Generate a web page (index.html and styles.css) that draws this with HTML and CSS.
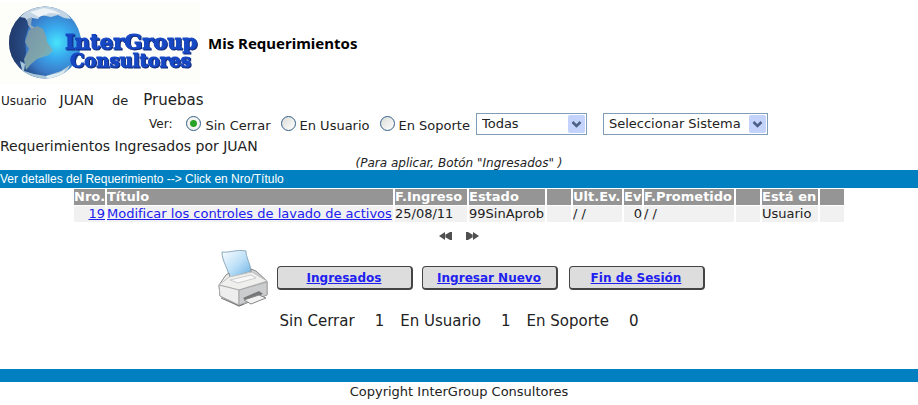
FILE: index.html
```html
<!DOCTYPE html>
<html lang="es">
<head>
<meta charset="utf-8">
<meta name="viewport" content="width=device-width, initial-scale=1">
<title>Mis Requerimientos</title>
<link rel="stylesheet" href="styles.css">
</head>
<body>
<header class="header">
  <svg class="logo" viewBox="0 0 200 82" role="img" aria-label="InterGroup Consultores">
    <defs>
      <radialGradient id="sea" cx="0.66" cy="0.5" r="0.68">
        <stop offset="0" stop-color="#48e4fb"/>
        <stop offset="0.3" stop-color="#39aaee"/>
        <stop offset="0.62" stop-color="#3a79c6"/>
        <stop offset="0.85" stop-color="#23487f"/>
        <stop offset="1" stop-color="#1b3260"/>
      </radialGradient>
      <linearGradient id="land" x1="0" y1="0" x2="1" y2="1">
        <stop offset="0" stop-color="#7792a8"/>
        <stop offset="0.6" stop-color="#7fa6ac"/>
        <stop offset="1" stop-color="#62c4d4"/>
      </linearGradient>
      <clipPath id="globe"><circle cx="45" cy="40.500" r="36"/></clipPath>
      <filter id="soft"><feGaussianBlur stdDeviation="0.7"/></filter>
    </defs>
    <rect width="200" height="82" fill="#fdfefa"/>
    <g clip-path="url(#globe)">
      <rect x="8" y="3" width="74" height="75" fill="url(#sea)"/>
      <g filter="url(#soft)" transform="translate(0 -2)">
        <path d="M9 25 L26 15 L29 26 L25 39 L26 52 L24 62 L13 62 L8 45Z" fill="#213a6e" opacity="0.7"/>
        <path d="M20 17 L31 7 L47 5 L64 10 L71 19 L64 18 L58 15 L51 17 L41 15 L38 19 L32 18 L29 23 L25 18Z" fill="#c3d4e4"/>
        <path d="M30 12 L44 8 L53 10 L61 14 L50 13 L39 17Z" fill="#edf3f6"/>
        <path d="M27 19 L32 17 L31 25 L35 28 L32 30 L28 25Z" fill="#91a9be"/>
        <path d="M29 30 L37 26 L43 29 L46 36 L47 42 L53 50 L49 55 L43 57 L37 59 L31 64 L26 70 L24 59 L29 49 L25 42Z" fill="url(#land)"/>
        <path d="M20 61 L25 64 L24 71 L34 74 L46 76 L61 71 L70 65 L64 78 L43 82 L24 78Z" fill="#a9c7da"/>
        <path d="M46 76 L59 73 L66 69 L60 78 L48 80Z" fill="#e0edf0"/>
      </g>
    </g>
    <g class="logo-text">
      <text x="65" y="47">InterGroup</text>
      <text class="logo-small" x="70" y="65">Consultores</text>
    </g>
  </svg>
  <h1 class="page-title">Mis Requerimientos</h1>
</header>

<main>
  <div class="user">
    <span class="user-label">Usuario</span>
    <span class="user-name">JUAN</span>
    <span class="user-of">de</span>
    <span class="user-last">Pruebas</span>
  </div>

  <form class="filters">
    <span class="see">Ver:</span>
    <label class="option"><input type="radio" name="ver" checked>Sin Cerrar</label>
    <label class="option"><input type="radio" name="ver">En Usuario</label>
    <label class="option"><input type="radio" name="ver">En Soporte</label>
    <span class="select select-type">
      <select aria-label="Tipo"><option>Todas</option></select>
      <svg class="arrow" viewBox="0 0 17 18" aria-hidden="true"><rect width="17" height="18" rx="2" fill="#c3d3fb"/><path d="M4.500 7 L8.500 11 L12.500 7" fill="none" stroke="#4d6185" stroke-width="2.500"/></svg>
    </span>
    <span class="select select-system">
      <select aria-label="Sistema"><option>Seleccionar Sistema</option></select>
      <svg class="arrow" viewBox="0 0 17 18" aria-hidden="true"><rect width="17" height="18" rx="2" fill="#c3d3fb"/><path d="M4.500 7 L8.500 11 L12.500 7" fill="none" stroke="#4d6185" stroke-width="2.500"/></svg>
    </span>
  </form>

  <h2 class="subtitle">Requerimientos Ingresados por JUAN</h2>
  <p class="hint">(Para aplicar, Botón "Ingresados" )</p>
  <p class="bar">Ver detalles del Requerimiento --&gt; Click en Nro/Título</p>

  <table class="grid">
    <colgroup>
      <col class="c-nro"><col class="c-title"><col class="c-date"><col class="c-state"><col class="c-blank"><col class="c-last"><col class="c-ev"><col class="c-due"><col class="c-blank"><col class="c-where"><col class="c-blank">
    </colgroup>
    <thead>
      <tr><th>Nro.</th><th>Título</th><th>F.Ingreso</th><th>Estado</th><th></th><th>Ult.Ev.</th><th>Ev</th><th>F.Prometido</th><th></th><th>Está en</th><th></th></tr>
    </thead>
    <tbody>
      <tr><td class="num"><a href="#">19</a></td><td><a href="#">Modificar los controles de lavado de activos</a></td><td>25/08/11</td><td>99SinAprob</td><td></td><td>/ /</td><td class="num">0</td><td>/ /</td><td></td><td>Usuario</td><td></td></tr>
    </tbody>
  </table>

  <nav class="pager">
    <a href="#" aria-label="Anterior"><svg viewBox="0 0 13 10"><path d="M0 5 L6 1 V4 L11 1 H13 V9 H11 L6 6 V9Z" fill="#505050"/><path d="M6.500 3 V7" stroke="#aaa" stroke-width="0.700"/></svg></a>
    <a href="#" aria-label="Siguiente"><svg viewBox="0 0 13 10"><path d="M13 5 L7 1 V4 L2 1 H0 V9 H2 L7 6 V9Z" fill="#505050"/><path d="M6.500 3 V7" stroke="#aaa" stroke-width="0.700"/></svg></a>
  </nav>

  <div class="actions">
    <a class="print" href="#" aria-label="Imprimir">
      <svg viewBox="0 0 50 58">
        <defs>
          <linearGradient id="paper" x1="0" y1="0" x2="1" y2="1"><stop offset="0" stop-color="#fafdff"/><stop offset="0.5" stop-color="#bfe1f8"/><stop offset="1" stop-color="#67afe4"/></linearGradient>
          <linearGradient id="front" x1="0" y1="0" x2="1" y2="0"><stop offset="0" stop-color="#f5f5f5"/><stop offset="1" stop-color="#c2c3c6"/></linearGradient>
        </defs>
        <path d="M4 3 C12 4 19 0 28 2 C28 9 32 13 33 22 L11 29 C11 20 4 13 4 3Z" fill="url(#paper)" stroke="#8daabd"/>
        <path d="M1 36 L8 26 L11 24 L12 29 L33 24 L33 20 L38 22 L49 32 L49 46 L21 57 L2 47Z" fill="url(#front)" stroke="#888" stroke-linejoin="round"/>
        <path d="M1 36 L11 28 L34 23 L49 32 L21 41Z" fill="#efefee" stroke="#c0c0c0"/>
        <path d="M12 31 L33 26 L38 29 L20 34Z" fill="#f8f8f8" stroke="#ccc"/>
        <path d="M1 36 L21 41 V56 L2 47Z" fill="#eee" stroke="#aaa"/>
        <path d="M21 41 L49 33 V46 L21 56Z" fill="#cccdce" stroke="#a5a5a5"/>
        <path d="M25 49 L41 42 L45 45 L28 52Z" fill="#777"/>
        <path d="M26 51 L41 46 L48 49 L33 55Z" fill="#f2f2f2" stroke="#888"/>
        <path d="M3 49 L21 57 L26 55" fill="none" stroke="#777"/>
      </svg>
    </a>
    <a class="button" href="#">Ingresados</a>
    <a class="button" href="#">Ingresar Nuevo</a>
    <a class="button button-last" href="#">Fin de Sesión</a>
  </div>

  <dl class="totals">
    <dt>Sin Cerrar</dt><dd>1</dd>
    <dt>En Usuario</dt><dd>1</dd>
    <dt>En Soporte</dt><dd>0</dd>
  </dl>
</main>

<footer class="footer">Copyright InterGroup Consultores</footer>
</body>
</html>
```
FILE: styles.css
```css
* { box-sizing: border-box; }

body {
  margin: 0;
  background: #fff;
  color: #222;
  font: 13px/16px "DejaVu Sans", sans-serif;
}

h1, h2, p, dl, dd { margin: 0; }
a { color: #2020f0; }

.header {
  display: flex;
  align-items: center;
  gap: 8px;
  padding-top: 2px;
}
.logo { display: block; width: 200px; height: 82px; }
.logo-text text {
  font: bold 21px "DejaVu Serif", serif;
  fill: #1748c4;
  stroke: #1748c4;
  stroke-width: 1px;
  filter: drop-shadow(1px 1px 0 #102878);
}
.logo-text .logo-small { font-size: 18px; }
.page-title {
  color: #000;
  font: bold 15px/16px "Noto Sans", sans-serif;
}

.user {
  display: flex;
  align-items: baseline;
  padding: 8px 0 0 1px;
}
.user-label { margin-right: 13px; font-size: 12px; }
.user-name { margin-right: 18px; font-size: 14px; }
.user-of { margin-right: 15px; }
.user-last { font-size: 15px; }

.filters {
  display: flex;
  align-items: center;
  height: 28px;
  padding: 2px 0 0 149px;
}
.see { margin-right: 14px; font-size: 12px; }
.option {
  display: flex;
  align-items: flex-start;
  margin-right: 10px;
  padding-top: 3px;
  line-height: 20px;
}
.option input {
  appearance: none;
  width: 15px;
  height: 15px;
  margin: 0 4px 0 0;
  border: 1px solid #335f88;
  border-radius: 50%;
  background: linear-gradient(135deg, #dcdcd7, #fff);
}
.option input:checked {
  background: radial-gradient(circle, #27a227 0 3px, #f4f4f0 4px);
}
.select { position: relative; height: 22px; }
.select select {
  appearance: none;
  width: 100%;
  height: 100%;
  padding: 0 20px 0 5px;
  border: 1px solid #7f9db9;
  border-radius: 0;
  background: #fff;
  color: #222;
  font: 13px/16px "DejaVu Sans", sans-serif;
}
.select-type { width: 111px; margin-left: -4px; }
.select-system { width: 165px; margin-left: 16px; }
.arrow {
  position: absolute;
  top: 2px;
  right: 2px;
  width: 17px;
  height: 18px;
  pointer-events: none;
}

.subtitle { font-size: 14px; font-weight: normal; line-height: 19px; }
.hint {
  font-size: 12px;
  line-height: 14px;
  font-style: italic;
  text-align: center;
}
.bar {
  background: #0080c0;
  color: #fff;
  font: 12px/18px "Liberation Sans", sans-serif;
}

.grid {
  width: 774px;
  max-width: 100%;
  margin: 0 auto;
  border-spacing: 2px 1px;
  table-layout: fixed;
  white-space: nowrap;
}
.grid th, .grid td { height: 16px; padding: 0; text-align: left; line-height: 16px; }
.grid th { background: #959595; color: #fff; }
.grid td { background: #f1f1f1; }
.grid .num { text-align: right; }
.c-nro { width: 31px; }
.c-title { width: 286px; }
.c-date { width: 72px; }
.c-state { width: 76px; }
.c-blank { width: 24px; }
.c-last { width: 49px; }
.c-ev { width: 18px; }
.c-due { width: 90px; }
.c-where { width: 56px; }

.pager {
  display: flex;
  justify-content: center;
  gap: 14px;
  padding-top: 8px;
}
.pager svg { display: block; width: 13px; height: 10px; }

.actions {
  display: flex;
  justify-content: center;
  align-items: center;
  gap: 9px;
  padding: 8px 0 0 4px;
}
.print svg { display: block; width: 50px; height: 58px; }
.button {
  width: 136px;
  height: 24px;
  border: 2px solid #444;
  border-top-width: 1px;
  border-left-width: 1px;
  border-radius: 4px;
  background: #ddd;
  font-size: 12px;
  font-weight: bold;
  line-height: 22px;
  text-align: center;
}
.button-last { margin-left: 2px; }

.totals {
  display: flex;
  justify-content: center;
  padding-top: 6px;
  font-size: 15px;
}
.totals dt { margin-right: 20px; }
.totals dd { margin-right: 16px; }
.totals dd:last-child { margin-right: 0; }

.footer {
  margin-top: 40px;
  padding-top: 2px;
  border-top: 13px solid #0080c0;
  text-align: center;
}
```
